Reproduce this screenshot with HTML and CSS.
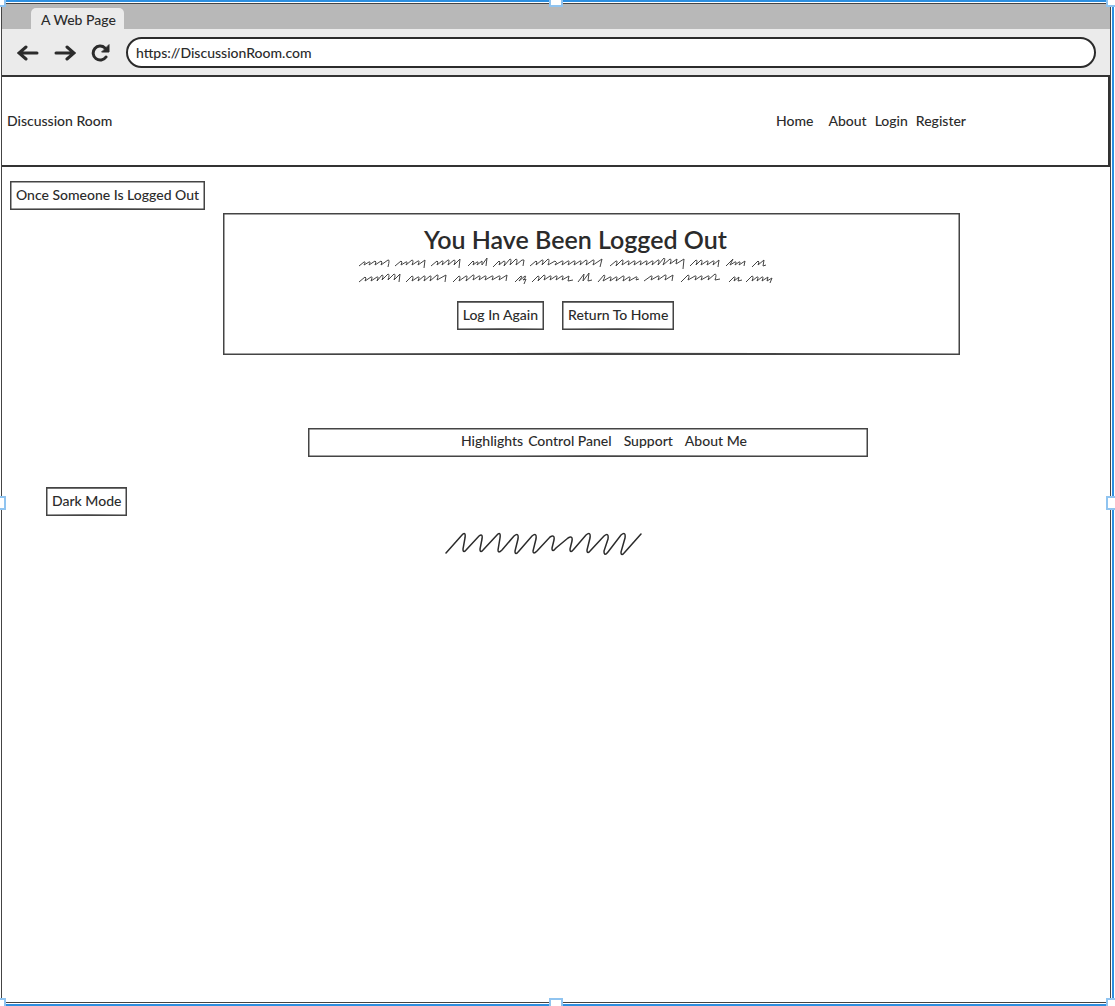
FILE: index.html
```html
<!DOCTYPE html>
<html lang="en">
<head>
<meta charset="utf-8">
<meta name="viewport" content="width=device-width, initial-scale=1">
<title>Discussion Room</title>
<link rel="stylesheet" href="styles.css">
</head>
<body>
<div class="selection">
  <div class="window">
    <div class="tabs"><div class="tab">A Web Page</div></div>
    <div class="toolbar">
      <button class="tool" type="button" aria-label="Back">
        <svg width="22" height="18" viewBox="0 0 22 18"><path d="M20 9H3M9 3L2 9l7 6"/></svg>
      </button>
      <button class="tool" type="button" aria-label="Forward">
        <svg width="22" height="18" viewBox="0 0 22 18"><path d="M2 9h17M13 3l7 6-7 6"/></svg>
      </button>
      <button class="tool" type="button" aria-label="Reload">
        <svg width="20" height="18" viewBox="0 0 20 18"><path d="M14 4A7 7 0 1 0 15 13"/><path class="solid" d="M18 1v7h-7z"/></svg>
      </button>
      <input class="address" type="text" aria-label="Address" value="https://DiscussionRoom.com">
    </div>
    <header class="header">
      <span>Discussion Room</span>
      <nav class="links">
        <a class="wide" href="#">Home</a>
        <a href="#">About</a>
        <a href="#">Login</a>
        <a href="#">Register</a>
      </nav>
    </header>
    <main class="main">
      <div class="box note">Once Someone Is Logged Out</div>
      <section class="box panel">
        <h1 class="title">You Have Been Logged Out</h1>
        <div class="body">
          <svg class="scribble" width="416" height="28" viewBox="0 0 416 28">
            <path d="M1 8l5-4q2-1 0 3l5-3q2-1 0 3l6-4q2 0 0 4l6-4q2 0 0 4l7-5q2-1 0 7M37 8l6-5q2 0 0 4l5-3q2-1 0 3l6-5q2 0 0 5l6-4q2-1 0 4l7-5-1 8M73 8l6-5q2 0 0 4l5-4q2-1 0 4l6-5q2-1 0 5l6-5q2 0 0 5l6-6-1 9M110 8l5-5q2 0 0 4l4-3q2-1 0 3l5-4 0 4 5-7-1 8"/>
            <path d="M135 9l6-6q2 0 0 4l5-4q2 0 0 5l6-7q2 0 0 6l6-6q2 0 0 6l6-5 2 0-1 6M172 8l6-5q2 0 0 4l6-5q2-1 0 5l6-6q2 0 0 6l7-4q3 1 0 4l7-4q2-1 0 4l6-4q2-1 0 4l6-4q2-1 0 4l6-4q2-1 0 4l6-5q2 0 0 5l7-5q2-1 0 5l9-6-2 8"/>
            <path d="M252 8l6-5q2-1 0 5l6-6q2-1 0 5l6-4q2-1 0 4l6-4q2-1 0 4l6-4q2-1 0 4l6-4q2-1 0 4l6-4q2-1 0 4l6-5q2-1 0 5l6-7q2 0-1 7l7-6q2 0 0 5l7-5-1 5 8-5-1 10M332 8l6-6q2 0 0 5l5-5q2 0 0 5l6-4q2-1 0 4l6-4q2-1 0 4l6-5-1 7M368 8l7-7-3 6 5-3q2-1 0 3l4-3q2-1 0 3l6-4-1 5M394 9l6-6q2 0 0 4l6-5-1 6 3-1"/>
            <path d="M1 24l6-5q2 0 0 4l6-4q2-1 0 4l6-4q2-1 0 4l5-6q2 0 0 5l6-6q2 0 0 6l6-6q2 0 0 6l6-6-1 8M48 24l6-6q2 0 0 5l6-4q2-1 0 4l6-5q2-1 0 5l6-5q2-1 0 5l7-6q2-1 0 5l9-5-1 7M95 24l6-6q2 0 0 5l7-5q2-1 0 5l7-6q2-1 0 5l6-4q2-1 0 4l6-4q2-1 0 4l7-4q2-1 0 4l7-4q2-1 0 4l8-5-1 6M157 24l6-6q2 0-2 5l6-5q2 0-2 4l3-1-2 5"/>
            <path d="M174 24l6-6q2 0 0 5l6-6q2 0 0 5l6-4q2-1 0 4l6-4q2-1 0 4l6-4q2-1 0 4l7-4-1 5 5-1M220 24l6-8-1 7 6-8-1 8 4-1M240 24l6-7q2 0-1 6l7-4q2-1 0 4l6-4q2-1 0 4l7-5q2-1 0 5l6-4q2-1 0 4l7-4q2-1 0 3l3-1M286 23l7-5q2-1 0 4l7-4q2-1 0 4l7-5q2-1 0 5l8-5-1 6"/>
            <path d="M323 24l7-7q2 0 0 5l7-4q2-1 0 4l6-4q2-1 0 4l7-4q2-1 0 4l7-6q2 0 0 6l5-1M371 24l5-5q2-1 0 4l5-4-1 4 4-1M388 24l6-6q2 0 0 5l5-4q2-1 0 4l5-4q2-1 0 4l6-4-1 4 5-3-2 5"/>
          </svg>
          <div class="actions">
            <button class="box button" type="button">Log In Again</button>
            <button class="box button" type="button">Return To Home</button>
          </div>
        </div>
      </section>
    </main>
    <footer class="footer">
      <nav class="box footer-links">
        <a href="#">Highlights</a>
        <a class="wide" href="#">Control Panel</a>
        <a class="wide" href="#">Support</a>
        <a href="#">About Me</a>
      </nav>
      <button class="box button" type="button">Dark Mode</button>
      <svg class="signature" width="198" height="26" viewBox="0 0 198 26"><path d="M2 22L18 4q4-4 3 3l-2 11q0 5 4 0L35 5q4-3 3 3l-2 10q0 5 4 0L53 4q4-4 3 3l-2 12q0 4 4 0L70 5q5-4 4 3l-3 12q0 5 4 0L88 5q5-4 4 3l-3 12q0 4 4 0L106 6q5-3 4 3l-2 8q0 5 4 0L124 7q5-3 4 3l-2 8q0 5 4 0L142 4q5-4 4 3l-3 12q0 5 4 0L160 5q5-4 4 3l-4 12q0 6 4 1L177 4q5-4 4 3l-4 14q0 5 4 0L197 3"/></svg>
    </footer>
  </div>
  <i class="handle top left"></i><i class="handle top center"></i><i class="handle top right"></i>
  <i class="handle middle left"></i><i class="handle middle right"></i>
  <i class="handle bottom left"></i><i class="handle bottom center"></i><i class="handle bottom right"></i>
</div>
</body>
</html>
```
FILE: styles.css
```css
* {
  box-sizing: border-box;
}

body {
  margin: 0;
  background: #fff;
  color: #2b2b2b;
  font: 500 14px/18px Lato, "Noto Sans", sans-serif;
}

a {
  color: inherit;
  text-decoration: none;
}

button,
input {
  font: inherit;
  color: inherit;
}

svg {
  display: block;
  fill: none;
  stroke: #2b2b2b;
}

/* selected artboard and its resize handles */
.selection {
  position: relative;
  display: flex;
  min-height: 100vh;
  padding: 3px 4px 3px 1px;
  box-shadow: inset -1px 0 #fff, inset -3px 0 #2d8fe0, inset 0 2px #2d8fe0, inset 0 -2px #2d8fe0;
  overflow: hidden;
}

.handle {
  position: absolute;
  width: 14px;
  height: 14px;
  border: 2px solid #90c4f0;
  background: #fff;
}

.top { top: -7px; }
.middle { top: calc(50% - 7px); }
.bottom { bottom: -6px; }
.left { left: -8px; }
.center { left: calc(50% - 9px); }
.right { right: -5px; }

.window {
  flex: 1;
  min-width: 0;
  border: 1px solid #444;
}

/* browser chrome */
.tabs {
  display: flex;
  padding: 4px 29px 0;
  background: #b8b8b8;
}

.tab {
  padding: 3px 8px 0 10px;
  height: 21px;
  border-radius: 5px 5px 0 0;
  background: #ebebeb;
}

.toolbar {
  display: flex;
  align-items: center;
  height: 48px;
  padding: 1px 14px 0 15px;
  border-bottom: 2px solid #333;
  background: #ebebeb;
}

.tool {
  flex: none;
  padding: 0;
  border: 0;
  margin-right: 15px;
  background: none;
}

.tool svg {
  stroke-width: 3;
  stroke-linecap: round;
}

.tool .solid {
  fill: #2b2b2b;
  stroke-width: 1;
}

.address {
  flex: 1;
  min-width: 0;
  height: 31px;
  padding: 0 8px;
  border: 2px solid #2b2b2b;
  border-radius: 16px;
  background: #fff;
}

/* site */
.header {
  display: flex;
  align-items: center;
  justify-content: space-between;
  height: 90px;
  padding: 0 142px 0 5px;
  border: solid #333;
  border-width: 0 2px 2px 0;
}

.links {
  display: flex;
  gap: 8px;
}

.links .wide,
.footer-links .wide {
  margin-right: 7px;
}

/* hand-drawn outline that stretches with its box */
.box {
  border: 0;
  background: no-repeat 0 0 / 100% 100% url("data:image/svg+xml,%3Csvg xmlns='http://www.w3.org/2000/svg' viewBox='0 0 100 100' preserveAspectRatio='none' width='100%25' height='100%25'%3E%3Cg fill='none' stroke='%23444' stroke-width='3'%3E%3Cpath vector-effect='non-scaling-stroke' d='M0 0Q40 1 100 0M0 100Q50 99 100 100M0 0L0 100M100 0L100 100'/%3E%3C/g%3E%3C/svg%3E");
}

.main {
  display: flex;
  flex-direction: column;
  align-items: flex-start;
  padding: 14px 150px 0 8px;
}

.note {
  padding: 5px 6px 6px;
}

.panel {
  align-self: stretch;
  padding: 11px 32px 25px 0;
  margin: 3px 0 0 213px;
}

.title {
  margin: 0;
  font-size: 25px;
  font-weight: 600;
  line-height: 30px;
  text-align: center;
}

.body {
  display: flex;
  flex-direction: column;
  align-items: center;
  padding: 4px 20px 0 0;
}

.scribble {
  stroke: #444;
  stroke-linejoin: round;
}

.actions {
  display: flex;
  gap: 18px;
  margin-top: 15px;
}

.button {
  height: 29px;
  padding: 0 6px 2px;
}

.footer {
  display: flex;
  flex-direction: column;
  align-items: flex-start;
  gap: 15px;
  padding: 73px 242px 0 44px;
}

.footer-links {
  align-self: stretch;
  display: flex;
  gap: 5px;
  padding: 4px 8px 7px 153px;
  margin: 0 0 15px 262px;
}

.signature {
  margin-left: 398px;
  stroke-width: 1.5;
  stroke-linecap: round;
}
```
